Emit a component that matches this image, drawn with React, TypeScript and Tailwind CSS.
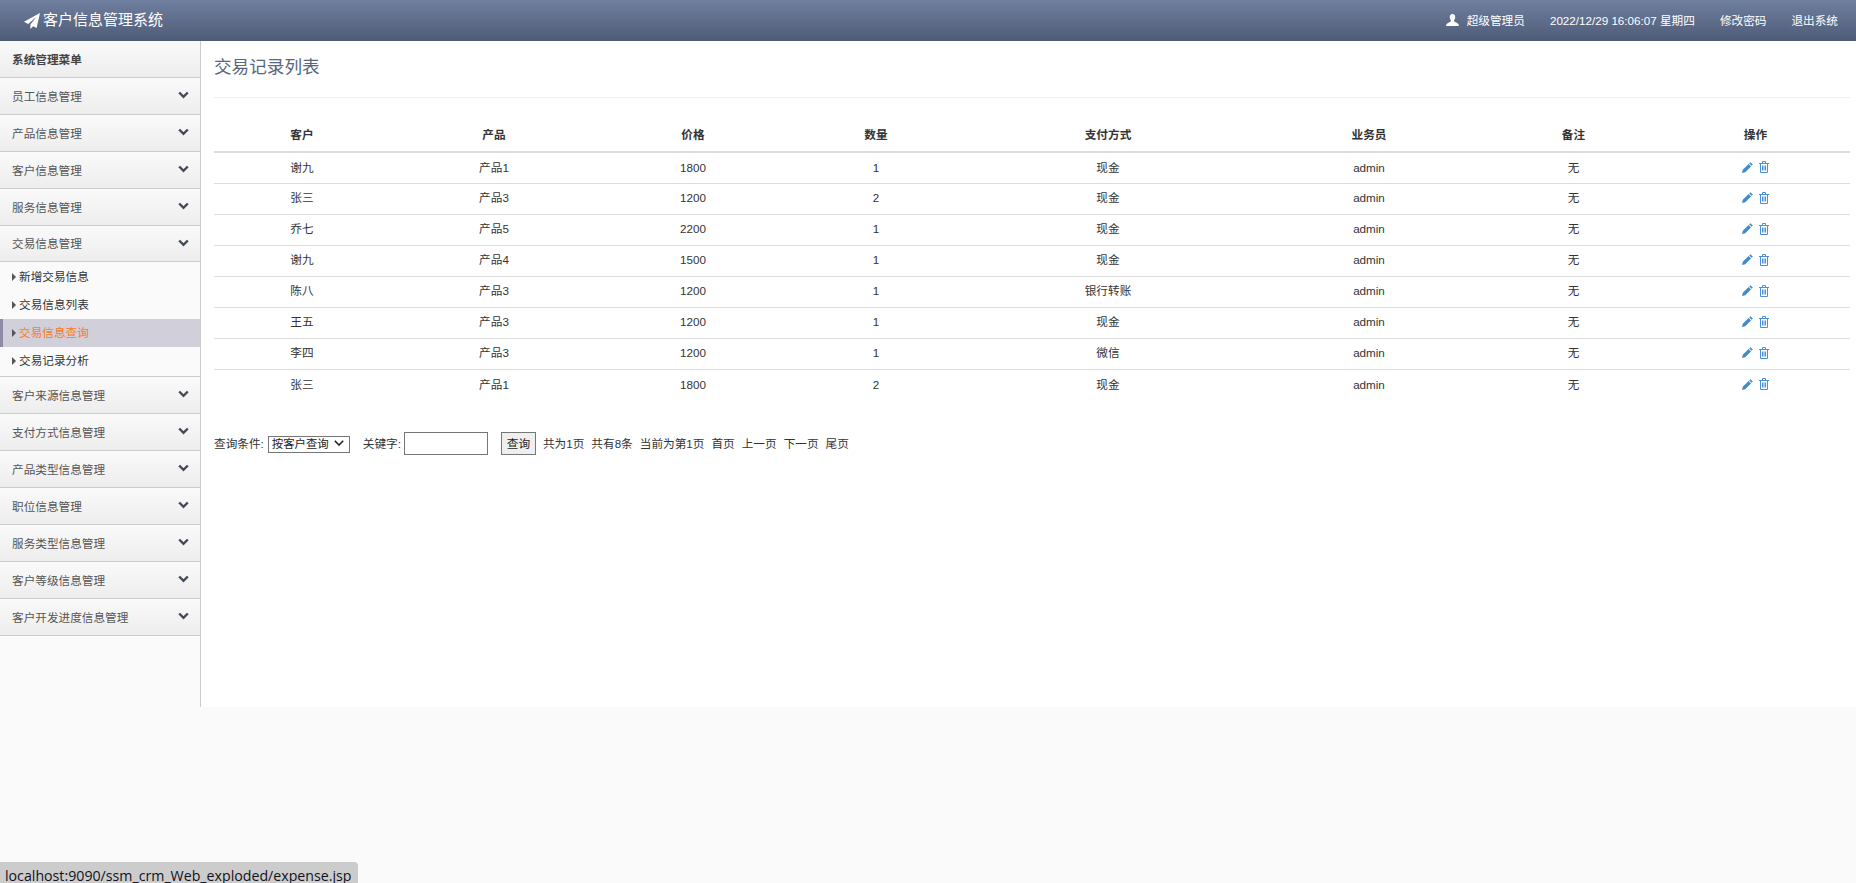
const FONT = "font-['Liberation_Sans','Noto_Sans_CJK_SC',sans-serif]";

const topMenus = [
  "员工信息管理",
  "产品信息管理",
  "客户信息管理",
  "服务信息管理",
  "交易信息管理",
];
const bottomMenus = [
  "客户来源信息管理",
  "支付方式信息管理",
  "产品类型信息管理",
  "职位信息管理",
  "服务类型信息管理",
  "客户等级信息管理",
  "客户开发进度信息管理",
];
const subMenus = ["新增交易信息", "交易信息列表", "交易信息查询", "交易记录分析"];
const columns = [
  { title: "客户", width: "w-[176px]" },
  { title: "产品", width: "w-[208px]" },
  { title: "价格", width: "w-[190px]" },
  { title: "数量", width: "w-[176px]" },
  { title: "支付方式", width: "w-[288px]" },
  { title: "业务员", width: "w-[234px]" },
  { title: "备注", width: "w-[175px]" },
  { title: "操作", width: "w-[189px]" },
];
const rows = [
  ["谢九", "产品1", "1800", "1", "现金"],
  ["张三", "产品3", "1200", "2", "现金"],
  ["乔七", "产品5", "2200", "1", "现金"],
  ["谢九", "产品4", "1500", "1", "现金"],
  ["陈八", "产品3", "1200", "1", "银行转账"],
  ["王五", "产品3", "1200", "1", "现金"],
  ["李四", "产品3", "1200", "1", "微信"],
  ["张三", "产品1", "1800", "2", "现金"],
];
const pageInfo = ["共为1页", "共有8条", "当前为第1页", "首页", "上一页", "下一页", "尾页"];

const SendIcon = () => (
  <svg viewBox="0 0 16 16" className="h-[16px] w-[16px] fill-white">
    <path d="M16 0 L0 8.8 L4.2 11 L12.8 3.6 L6.4 11.6 L6.4 16 L9.2 13.2 L12.6 15 Z" />
  </svg>
);

const UserIcon = () => (
  <svg viewBox="0 0 13 12" className="mr-[8px] h-[12px] w-[13px] fill-white">
    <path d="M6.5 0 C4.6 0 3.8 1.4 3.8 3 C3.8 4.6 4.4 5.6 5 6.2 C5 7.4 4.4 7.8 3 8.4 C1.4 9 0.4 9.6 0 12 H13 C12.6 9.6 11.6 9 10 8.4 C8.6 7.8 8 7.4 8 6.2 C8.6 5.6 9.2 4.6 9.2 3 C9.2 1.4 8.4 0 6.5 0 Z" />
  </svg>
);

const ChevronIcon = () => (
  <svg viewBox="0 0 11 8" className="mb-[3px] h-[8px] w-[11px] fill-none stroke-[#444a55] stroke-[2.4]">
    <path d="M1.2 1.5 L5.5 5.8 L9.8 1.5" />
  </svg>
);

const PencilIcon = () => (
  <svg viewBox="0 0 11 11" className="h-[11px] w-[11px] fill-[#428bca]">
    <path d="M8.4 0.2 L10.8 2.6 L9.6 3.8 L7.2 1.4 Z M6.6 2 L9 4.4 L3.2 10.2 L0 11 L0.8 7.8 Z" />
  </svg>
);

const TrashIcon = () => (
  <svg viewBox="0 0 10 12" className="h-[12px] w-[10px] fill-none stroke-[#4a90d9]">
    <path d="M0 2.5 H10 M3.5 2.5 V0.5 H6.5 V2.5 M1.5 2.5 V11.5 H8.5 V2.5 M3.5 4.5 V9.5 M5 4.5 V9.5 M6.5 4.5 V9.5" />
  </svg>
);

const MenuRow = ({ label, short }: { label: string; short?: boolean }) => (
  <div
    className={`flex items-center justify-between border-b border-[#cccccc] bg-gradient-to-b from-[#fafafa] to-[#ededed] pt-[1px] pr-[11px] pl-[12px] text-[11.65px] text-[#555555] ${
      short ? "h-[36px]" : "h-[37px]"
    }`}
  >
    <span>{label}</span>
    <ChevronIcon />
  </div>
);

const App = () => {
  return (
    <div className={`relative h-[883px] overflow-hidden bg-[#fafafa] ${FONT}`}>
      <header className="flex h-[41px] items-center justify-between bg-gradient-to-b from-[#6f7f9f] to-[#4f5c78] pr-[18px] pl-[24px] text-white">
        <div className="flex items-center gap-[3px] text-[15px]">
          <SendIcon />
          <span>客户信息管理系统</span>
        </div>
        <div className="flex items-center text-[11.65px]">
          <UserIcon />
          <span className="mr-[25px]">超级管理员</span>
          <span className="mr-[25px]">2022/12/29 16:06:07 星期四</span>
          <span className="mr-[25px]">修改密码</span>
          <span>退出系统</span>
        </div>
      </header>

      <div className="flex h-[666px]">
        <aside className="w-[201px] shrink-0 border-r border-[#cccccc]">
          <div className="flex h-[37px] items-center border-b border-[#cccccc] bg-gradient-to-b from-[#fafafa] to-[#ededed] px-[12px] pt-[1px] text-[11.65px] font-bold text-[#444444]">
            系统管理菜单
          </div>
          {topMenus.map((m, i) => (
            <MenuRow key={m} label={m} short={i === 4} />
          ))}
          <ul className="border-b border-[#cccccc] bg-[#fafafa] py-[1px]">
            {subMenus.map((s, i) => (
              <li
                key={s}
                className={`flex h-[28px] items-center text-[11.65px] ${
                  i === 2
                    ? "border-l-[3px] border-[#8e8ba8] bg-[#d0cfda] pl-[9px] text-[#ff7a20]"
                    : "pl-[12px] text-[#333333]"
                }`}
              >
                <span className="mr-[3px] h-0 w-0 border-y-[4px] border-l-[4px] border-y-transparent border-l-[#555555]" />
                {s}
              </li>
            ))}
          </ul>
          {bottomMenus.map((m) => (
            <MenuRow key={m} label={m} />
          ))}
        </aside>

        <main className="flex-1 bg-white pr-[6px] pl-[13px] text-[11.65px] text-[#333333]">
          <h1 className="h-[57px] border-b border-[#eeeeee] pt-[13px] text-[17.6px] leading-[26px] font-normal text-[#566780]">
            交易记录列表
          </h1>
          <table className="mt-[18px] w-full table-fixed border-collapse text-center">
            <thead>
              <tr className="h-[36px] border-b-2 border-[#dddddd]">
                {columns.map((c) => (
                  <th key={c.title} className={`${c.width} pt-[2px] font-bold text-[#333333]`}>
                    {c.title}
                  </th>
                ))}
              </tr>
            </thead>
            <tbody>
              {rows.map((r, i) => (
                <tr key={i} className="h-[31px] border-b border-[#dddddd] last:border-b-0">
                  {r.map((cell, j) => (
                    <td key={j} className="pb-[1px]">
                      {cell}
                    </td>
                  ))}
                  <td className="pb-[1px]">admin</td>
                  <td className="pb-[1px]">无</td>
                  <td className="pt-[1px]">
                    <span className="inline-flex items-center gap-[6px]">
                      <PencilIcon />
                      <TrashIcon />
                    </span>
                  </td>
                </tr>
              ))}
            </tbody>
          </table>
          <div className="mt-[32px] flex items-center">
            <span>查询条件:</span>
            <div className="relative mr-[11px] ml-[4px] h-[17px] w-[82px]">
              <select className="h-full w-full appearance-none overflow-hidden border border-[#767676] bg-white pr-[18px] pl-[3px] text-[11.4px] leading-[15px] text-[#222222]">
                <option>按客户查询</option>
              </select>
              <svg
                viewBox="0 0 10 6"
                className="pointer-events-none absolute top-[5px] right-[6px] h-[6px] w-[10px] fill-none stroke-[#222222] stroke-[1.6]"
              >
                <path d="M0.8 0.8 L5 5 L9.2 0.8" />
              </svg>
            </div>
            <span className="ml-[2px]">关键字:</span>
            <input className="mr-[13px] ml-[3px] h-[23px] w-[84px] border border-[#767676] bg-white" />
            <button className="mr-[7px] h-[23px] w-[35px] border border-[#767676] bg-[#efefef] text-[11.65px] text-[#222222]">
              查询
            </button>
            <div className="flex gap-[7px]">
              {pageInfo.map((p) => (
                <span key={p}>{p}</span>
              ))}
            </div>
          </div>
        </main>
      </div>

      <div className="absolute bottom-0 left-0 h-[21px] w-[358px] overflow-hidden rounded-tr-[4px] bg-[#cccccc] pt-[4px] pl-[5px] font-['Open_Sans',sans-serif] text-[14.2px] leading-[20px] whitespace-nowrap text-[#12121f]">
        localhost:9090/ssm_crm_Web_exploded/expense.jsp
      </div>
    </div>
  );
};

export default App;
